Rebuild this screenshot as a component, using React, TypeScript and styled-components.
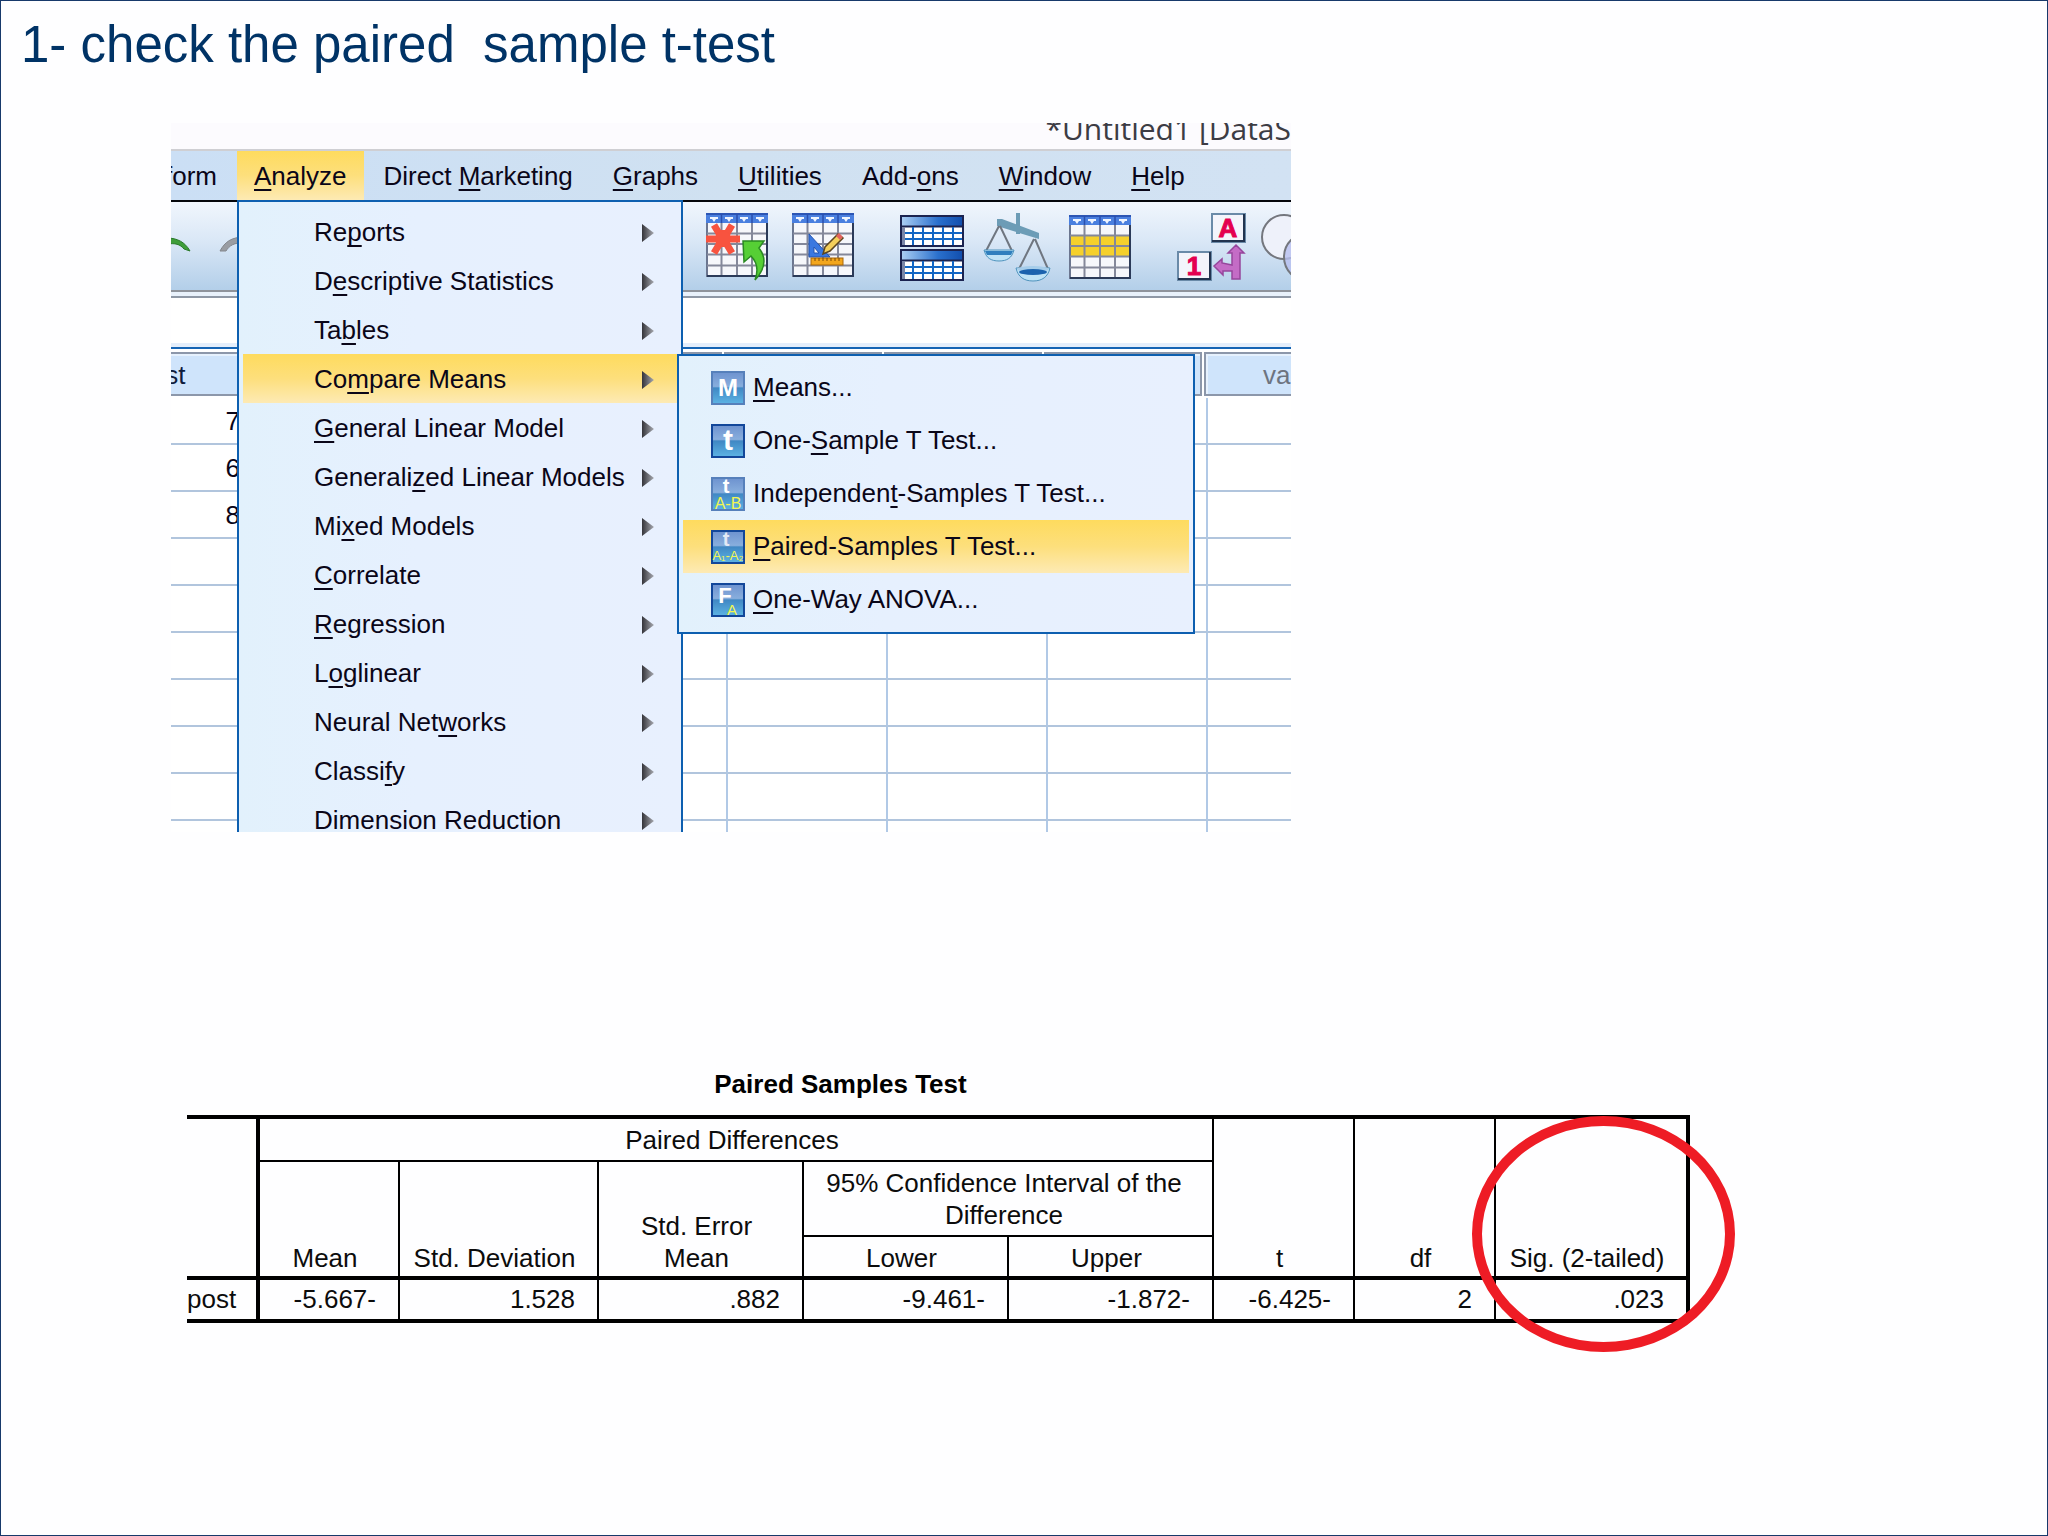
import React from 'react';
import styled, { createGlobalStyle, css } from 'styled-components';

const GlobalStyle = createGlobalStyle`
  * { box-sizing: border-box; }
  body {
    margin: 0;
    background: #fefeff;
    font-family: "Liberation Sans", Arial, sans-serif;
  }
  button {
    font: inherit;
    color: inherit;
    border: 0;
    background: none;
    cursor: pointer;
  }
`;

const highlight = css`
  background: linear-gradient(#fedb5e, #fddf7c 50%, #fdeab4);
`;

const Slide = styled.main`
  min-height: 100vh;
  border: 1px solid #17396b;
  background: #fefeff;
  padding: 14px 20px 40px;
`;

const SlideTitle = styled.h1`
  margin: 0 0 48px;
  font-size: 51px;
  line-height: 60px;
  font-weight: 400;
  color: #003366;
  white-space: pre-wrap;
`;

/* ---------- SPSS window ---------- */

const AppWindow = styled.section`
  width: 100%;
  max-width: 1120px;
  height: 709px;
  margin-left: 150px;
  overflow: hidden;
  font-size: 26px;
  color: #0a0618;
  background: #fff;
`;

const TitleBar = styled.header`
  display: flex;
  align-items: flex-end;
  justify-content: flex-end;
  height: 28px;
  padding-bottom: 2px;
  overflow: hidden;
  border-bottom: 2px solid #cfcfd3;
  background: #fcfbfe;
  font-family: "Open Sans", "Noto Sans", sans-serif;
  font-size: 30px;
  line-height: 36px;
  color: #3c3c44;
  white-space: nowrap;
`;

const MenuBar = styled.nav`
  display: flex;
  height: 51px;
  background: linear-gradient(90deg, #cbdff5, #d0e1f1 50%, #d2e2f3);
  border-bottom: 2px solid #05070c;
`;

const MenuRoot = styled.div`
  position: relative;
  display: flex;
`;

const MenuBarButton = styled.button<{ $active?: boolean }>`
  padding: 2px ${(p) => (p.$active ? 17 : 20)}px 0;
  white-space: nowrap;
  ${(p) => p.$active && highlight}
`;

const CutMenuBarButton = styled(MenuBarButton)`
  display: flex;
  align-items: center;
  justify-content: flex-end;
  width: 66px;
  overflow: hidden;
`;

const Mnemonic = styled.span`
  text-decoration: underline;
  text-decoration-thickness: 2px;
  text-underline-offset: 4px;
  text-decoration-skip-ink: none;
`;

const MenuPanel = styled.ul`
  position: absolute;
  z-index: 2;
  margin: 0;
  padding: 5px 4px;
  list-style: none;
  border: 2px solid #0d5fb0;
  background: linear-gradient(90deg, #e2f1fc, #e6f0fe 40%, #e8f0fe);
`;

const AnalyzePanel = styled(MenuPanel)`
  top: 49px;
  left: 0;
  width: 446px;
`;

const SubPanel = styled(MenuPanel)`
  top: 0;
  left: 100%;
  width: 518px;
  height: 280px;
`;

const MenuEntry = styled.li`
  position: relative;
`;

const MenuButton = styled.button<{ $active?: boolean }>`
  display: flex;
  align-items: center;
  justify-content: space-between;
  width: 100%;
  height: 49px;
  padding: 2px 23px 0 71px;
  text-align: left;
  white-space: nowrap;
  ${(p) => p.$active && highlight}
`;

const SubButton = styled(MenuButton)`
  justify-content: flex-start;
  gap: 8px;
  height: 53px;
  padding: 0 28px;
`;

const Toolbar = styled.div`
  display: flex;
  align-items: flex-start;
  gap: 40px;
  height: 96px;
  padding-top: 11px;
  border-bottom: 2px solid #8e98a6;
  background: linear-gradient(
    #f1f6fd 0,
    #d9e7f6 40px,
    #b3cfe9 88px,
    #8e939b 88px,
    #8e939b 90px,
    #e8f1fb 90px
  );
`;

const ToolGroup = styled.div<{ $width?: number }>`
  display: flex;
  flex: none;
  gap: 17px;
  width: ${(p) => (p.$width ? p.$width + 'px' : 'auto')};
`;

const ToolButton = styled.button`
  flex: none;
  padding: 0;
  line-height: 0;
`;

const EntryBar = styled.div`
  height: 51px;
  border-bottom: 2px solid #1564b4;
  background: linear-gradient(#fff 0, #fff 45px, #e4eefb 45px);
`;

const Sheet = styled.table`
  width: 1280px;
  margin: 3px 0 0 -83px;
  table-layout: fixed;
  border-spacing: 0;
`;

const SheetHead = styled.th`
  height: 46px;
  padding: 0;
  vertical-align: top;
  font-weight: 400;
`;

const HeadBox = styled.div<{ $dim?: boolean }>`
  height: 44px;
  margin: 0 6px 0 -4px;
  padding-right: 4px;
  border: 2px solid #8c97aa;
  background: #cfe4fb;
  box-shadow: inset 2px 2px 0 #e6f1fd;
  line-height: 42px;
  text-align: center;
  color: ${(p) => (p.$dim ? '#6d7480' : '#0f1c3c')};
`;

const SheetCell = styled.td`
  height: 47px;
  padding: 0 6px;
  border-right: 2px solid #b1c9e6;
  border-bottom: 2px solid #b1c5dd;
  text-align: right;
  line-height: 40px;
  background: #fff;
`;

/* ---------- result table ---------- */

const Results = styled.section`
  position: relative;
  width: 100%;
  max-width: 1503px;
  margin: 236px 0 0 166px;
`;

const StatTable = styled.table`
  width: 100%;
  table-layout: fixed;
  border-spacing: 0;
  border-top: 4px solid #000;
  border-bottom: 4px solid #000;
  font-size: 26px;
  line-height: 32px;
  color: #0c0c0c;
`;

const StatCaption = styled.caption`
  padding: 0 196px 15px 0;
  font-weight: 700;
  color: #000;
`;

const edge = (w: number) => `${w}px solid #000`;

const StatHead = styled.th<{ $right?: number; $bottom?: number; $middle?: boolean }>`
  padding: 2px 8px 2px 0;
  font-weight: 400;
  vertical-align: ${(p) => (p.$middle ? 'middle' : 'bottom')};
  border-right: ${(p) => edge(p.$right ?? 2)};
  border-bottom: ${(p) => edge(p.$bottom ?? 4)};
`;

const StatCell = styled.td<{ $right?: number }>`
  height: 39px;
  padding: 0 22px 2px 0;
  text-align: right;
  border-right: ${(p) => edge(p.$right ?? 2)};
`;

const StatRowHead = styled.th`
  padding: 0 20px 2px 0;
  font-weight: 400;
  text-align: right;
  border-right: ${edge(4)};
`;

const StatRow = styled.tr<{ $height: number }>`
  height: ${(p) => p.$height}px;
`;

const RedRing = styled.span`
  position: absolute;
  top: 48px;
  right: -45px;
  width: 263px;
  height: 236px;
  border: 10px solid #ee1c25;
  border-radius: 50%;
  pointer-events: none;
`;

/* ---------- icons ---------- */

const GridArt = ({ y = 0, band = false }: { y?: number; band?: boolean }) => (
  <g transform={`translate(0 ${y})`}>
    <rect x="1" y="1" width="60" height="62" fill="#f6f7fb" stroke="#6b7690" strokeWidth="2" />
    {band && <rect x="2" y="20" width="58" height="21" fill="#f5d02c" />}
    <path d="M15.5 10V63M31 10V63M46 10V63M1 20.5H61M1 31H61M1 41.5H61M1 52.5H61" stroke="#84889a" strokeWidth="2" />
    <rect x="0" y="0" width="62" height="10" fill="#4a7fdf" />
    <rect x="0" y="0" width="62" height="2" fill="#2c55b4" />
    <path d="M15.5 1V10M31 1V10M46 1V10" stroke="#2a4fae" strokeWidth="1.5" />
    <path d="M4 4H12V6H10L8 9L6 6H4ZM19 4H27V6H25L23 9L21 6H19ZM34 4H42V6H40L38 9L36 6H34ZM50 4H58V6H56L54 9L52 6H50Z" fill="#eef4ff" />
    <path d="M61 10V63H1" fill="none" stroke="#2b3a58" strokeWidth="2" />
  </g>
);

const Art = ({ label, children }: { label: string; children: React.ReactNode }) => (
  <svg width="68" height="72" viewBox="0 0 68 72" overflow="visible" role="img" aria-label={label}>
    {children}
  </svg>
);

const UndoArt = () => (
  <Art label="Undo">
    <path d="M-4 25C6 25 14 29 19 38L13 36C9 31 4 30 -4 31Z" fill="#3f9e3a" stroke="#2b7a2c" />
  </Art>
);

const RedoArt = () => (
  <Art label="Redo">
    <path d="M-36 38C-31 29 -25 24 -11 24V30C-22 29 -27 33 -30 38Z" fill="#9a9da3" stroke="#83868c" />
  </Art>
);

const VariablesArt = () => (
  <Art label="Go to case">
    <GridArt />
    <path d="M17 17V34M8 12L14 22M26 12L20 22M8 40L14 30M26 40L20 30M0 26H34" stroke="#f8533f" strokeWidth="7" />
    <circle cx="17" cy="26" r="8" fill="#f8533f" />
    <path d="M37 28H58L53 35C60 44 60 55 49 67C53 56 51 49 45 43L38 49Z" fill="#56cf35" stroke="#2a8a22" strokeWidth="1.500" />
  </Art>
);

const DesignArt = () => (
  <Art label="Variable view">
    <g transform="translate(1 0)">
      <GridArt />
      <path d="M17 21L38 44H17ZM22 34V40H27Z" fill="#3a78e0" fillRule="evenodd" stroke="#2554b0" />
      <path d="M31 41L33 34L46 21L51 25L38 38Z" fill="#f4cf5b" stroke="#5c4520" strokeWidth="1.500" />
      <path d="M44 23L47 20L51 24L48 27Z" fill="#e2625c" />
      <rect x="19" y="45" width="32" height="7" fill="#f3a61c" stroke="#a8670a" />
      <path d="M23 45V48M27 45V48M31 45V48M35 45V48M39 45V48M43 45V48M47 45V48" stroke="#7c4b06" />
    </g>
  </Art>
);

const SplitBlock = ({ y }: { y: number }) => (
  <g transform={`translate(1 ${y})`}>
    <rect x="1" y="1" width="62" height="30" fill="#fff" stroke="#1b2350" strokeWidth="2" />
    <rect x="2" y="2" width="60" height="9" fill="url(#splitHead)" />
    <path d="M1 11.500H63" stroke="#1b2350" strokeWidth="2" />
    <path d="M4 18H62M4 24H62M13 12V30M23 12V30M33 12V30M43 12V30M53 12V30" stroke="#1266c4" strokeWidth="2" />
    <path d="M3.500 12V30" stroke="#7a86a8" strokeWidth="3" />
  </g>
);

const SplitArt = () => (
  <Art label="Split file">
    <defs>
      <linearGradient id="splitHead">
        <stop offset="0" stopColor="#a9cdf3" />
        <stop offset="0.6" stopColor="#2a70cd" />
        <stop offset="1" stopColor="#124fae" />
      </linearGradient>
    </defs>
    <SplitBlock y={2} />
    <SplitBlock y={36} />
  </Art>
);

const ScalesArt = () => (
  <Art label="Weight cases">
    <path d="M34 0V21" stroke="#6c9cb6" strokeWidth="4" />
    <path d="M13 6H18L55 20V26L13 13Z" fill="#6c9cb6" />
    <path d="M15 13L2 38M16 13L28 38M50 26L35 56M51 26L64 56" stroke="#6f7680" strokeWidth="2" fill="none" />
    <path d="M0 37H30C28 45 23 48 15 48S2 45 0 37Z" fill="#bfe3f6" stroke="#4f93bd" />
    <path d="M1 38H29L27 42H3Z" fill="#2f7fbe" />
    <path d="M32 55H66C64 64 58 68 49 68S34 64 32 55Z" fill="#bfe3f6" stroke="#4f93bd" />
    <ellipse cx="49" cy="56" rx="16" ry="3" fill="#a6cdea" />
    <ellipse cx="49" cy="59" rx="14" ry="3" fill="#1b63ae" />
  </Art>
);

const SelectArt = () => (
  <Art label="Select cases">
    <GridArt y={2} band />
  </Art>
);

const LabelsArt = () => (
  <Art label="Value labels">
    <g fontFamily="Liberation Sans, Arial, sans-serif" fontWeight="700" fill="#e4004f" stroke="#e4004f" textAnchor="middle">
      <rect x="35" y="1" width="33" height="28" fill="#f3f4fb" stroke="#6a8aa8" strokeWidth="2" />
      <path d="M67 1V28H35" fill="none" stroke="#22344f" strokeWidth="2" />
      <text x="51" y="24" fontSize="26">A</text>
      <rect x="1" y="39" width="33" height="28" fill="#f3f4fb" stroke="#6a8aa8" strokeWidth="2" />
      <path d="M33 39V66H1" fill="none" stroke="#22344f" strokeWidth="2" />
      <text x="17" y="62" fontSize="26">1</text>
    </g>
    <path d="M59 32L67 40H63V66H55V58H46V62L37 53L45 46V50L55 52V40H51Z" fill="#c46cc6" stroke="#96469c" strokeWidth="1.500" />
  </Art>
);

const SetsArt = () => (
  <Art label="Use variable sets">
    <circle cx="22" cy="24" r="22" fill="#eef1fa" stroke="#74777e" strokeWidth="2" />
    <circle cx="46" cy="44" r="24" fill="#b6bff0" stroke="#74777e" strokeWidth="2" fillOpacity="0.8" />
  </Art>
);

const ArrowArt = () => (
  <svg width="12" height="18" viewBox="0 0 12 18" aria-hidden="true">
    <defs>
      <linearGradient id="arrowFill">
        <stop offset="0" stopColor="#34343a" />
        <stop offset="1" stopColor="#a7a9b0" />
      </linearGradient>
    </defs>
    <path d="M0 0L12 9L0 18Z" fill="url(#arrowFill)" />
  </svg>
);

type Glyph = { t: string; x: number; y: number; size: number; color?: string };

const TestArt = ({ glyphs, dark }: { glyphs: Glyph[]; dark?: boolean }) => (
  <svg width="34" height="34" viewBox="0 0 34 34" aria-hidden="true">
    <defs>
      <linearGradient id="testFill" x1="0" y1="0" x2="0" y2="1">
        <stop offset="0" stopColor="#6d92cf" />
        <stop offset="0.45" stopColor="#88aedd" />
        <stop offset="0.5" stopColor="#4088c4" />
        <stop offset="1" stopColor="#5db4e4" />
      </linearGradient>
    </defs>
    <rect x="1" y="1" width="32" height="32" fill="url(#testFill)" stroke={dark ? '#12479a' : '#5680bb'} strokeWidth="2" />
    {glyphs.map((g) => (
      <text
        key={g.t}
        x={g.x}
        y={g.y}
        fontSize={g.size}
        fontWeight={g.color === YELLOW ? 400 : 700}
        fontFamily="Liberation Sans, Arial, sans-serif"
        textAnchor="middle"
        fill={g.color ?? '#fff'}
      >
        {g.t}
      </text>
    ))}
  </svg>
);

/* ---------- data ---------- */

// An ampersand stands before the access key of each label.
const Label = ({ text }: { text: string }) => {
  const at = text.indexOf('&');
  if (at < 0) return <span>{text}</span>;
  return (
    <span>
      {text.slice(0, at)}
      <Mnemonic>{text[at + 1]}</Mnemonic>
      {text.slice(at + 2)}
    </span>
  );
};

const analyzeItems = [
  'Re&ports',
  'D&escriptive Statistics',
  'Ta&bles',
  'Co&mpare Means',
  '&General Linear Model',
  'Generali&zed Linear Models',
  'Mi&xed Models',
  '&Correlate',
  '&Regression',
  'L&oglinear',
  'Neural Net&works',
  'Classi&fy',
  '&Dimension Reduction',
];

const YELLOW = '#f3f650';

const meansItems: { label: string; dark?: boolean; active?: boolean; glyphs: Glyph[] }[] = [
  { label: '&Means...', glyphs: [{ t: 'M', x: 17, y: 25, size: 24 }] },
  { label: 'One-&Sample T Test...', dark: true, glyphs: [{ t: 't', x: 17, y: 26, size: 30 }] },
  {
    label: 'Independen&t-Samples T Test...',
    glyphs: [
      { t: 't', x: 15, y: 16, size: 20 },
      { t: 'A-B', x: 17, y: 32, size: 16, color: YELLOW },
    ],
  },
  {
    label: '&Paired-Samples T Test...',
    active: true,
    dark: true,
    glyphs: [
      { t: 't', x: 15, y: 16, size: 20, color: '#e3e9f5' },
      { t: 'A₁-A₂', x: 17, y: 30, size: 13, color: YELLOW },
    ],
  },
  {
    label: '&One-Way ANOVA...',
    dark: true,
    glyphs: [
      { t: 'F', x: 14, y: 20, size: 22 },
      { t: 'A', x: 21, y: 32, size: 15, color: YELLOW },
    ],
  },
];

const otherMenus = ['Direct &Marketing', '&Graphs', '&Utilities', 'Add-&ons', '&Window', '&Help'];
const scores = ['7', '6', '8', '', '', '', '', '', '', ''];
const emptyCols = [1, 2, 3, 4, 5, 6, 7];

const MeansMenu = () => (
  <SubPanel>
    {meansItems.map((m) => (
      <MenuEntry key={m.label}>
        <SubButton $active={m.active}>
          <TestArt glyphs={m.glyphs} dark={m.dark} />
          <Label text={m.label} />
        </SubButton>
      </MenuEntry>
    ))}
  </SubPanel>
);

const DataSheet = () => (
  <Sheet>
    <thead>
      <tr>
        <SheetHead scope="col">
          <HeadBox>post</HeadBox>
        </SheetHead>
        {emptyCols.map((c) => (
          <SheetHead key={c} scope="col">
            <HeadBox $dim>{c === 7 ? 'var' : ''}</HeadBox>
          </SheetHead>
        ))}
      </tr>
    </thead>
    <tbody>
      {scores.map((s, i) => (
        <tr key={i}>
          <SheetCell>{s}</SheetCell>
          {emptyCols.map((c) => (
            <SheetCell key={c} />
          ))}
        </tr>
      ))}
    </tbody>
  </Sheet>
);

const columnShares = [73, 140, 199, 205, 205, 205, 141, 141, 194];
const columnTotal = columnShares.reduce((a, b) => a + b, 0);

const ResultTable = () => (
  <Results>
    <StatTable>
      <StatCaption>Paired Samples Test</StatCaption>
      <colgroup>
        {columnShares.map((w, i) => (
          <col key={i} style={{ width: `${(w / columnTotal) * 100}%` }} />
        ))}
      </colgroup>
      <thead>
        <StatRow $height={43}>
          <StatHead as="td" rowSpan={3} $right={4} />
          <StatHead colSpan={5} $bottom={2} $middle>
            Paired Differences
          </StatHead>
          <StatHead rowSpan={3}>t</StatHead>
          <StatHead rowSpan={3}>df</StatHead>
          <StatHead rowSpan={3} $right={4}>
            Sig. (2-tailed)
          </StatHead>
        </StatRow>
        <StatRow $height={75}>
          <StatHead rowSpan={2}>Mean</StatHead>
          <StatHead rowSpan={2}>Std. Deviation</StatHead>
          <StatHead rowSpan={2}>
            Std. Error
            <br />
            Mean
          </StatHead>
          <StatHead colSpan={2} $bottom={2} $middle>
            95% Confidence Interval of the
            <br />
            Difference
          </StatHead>
        </StatRow>
        <StatRow $height={43}>
          <StatHead>Lower</StatHead>
          <StatHead>Upper</StatHead>
        </StatRow>
      </thead>
      <tbody>
        <tr>
          <StatRowHead scope="row">post</StatRowHead>
          <StatCell>-5.667-</StatCell>
          <StatCell>1.528</StatCell>
          <StatCell>.882</StatCell>
          <StatCell>-9.461-</StatCell>
          <StatCell>-1.872-</StatCell>
          <StatCell>-6.425-</StatCell>
          <StatCell>2</StatCell>
          <StatCell $right={4}>.023</StatCell>
        </tr>
      </tbody>
    </StatTable>
    <RedRing />
  </Results>
);

export default function App() {
  return (
    <>
      <GlobalStyle />
      <Slide>
        <SlideTitle>{'1- check the paired  sample t-test'}</SlideTitle>

        <AppWindow>
          <TitleBar>*Untitled1 [DataS</TitleBar>
          <MenuBar>
            <CutMenuBarButton>form</CutMenuBarButton>
            <MenuRoot>
              <MenuBarButton $active>
                <Label text="&Analyze" />
              </MenuBarButton>
              <AnalyzePanel>
                {analyzeItems.map((item) => {
                  const open = item === 'Co&mpare Means';
                  return (
                    <MenuEntry key={item}>
                      <MenuButton $active={open}>
                        <Label text={item} />
                        <ArrowArt />
                      </MenuButton>
                      {open && <MeansMenu />}
                    </MenuEntry>
                  );
                })}
              </AnalyzePanel>
            </MenuRoot>
            {otherMenus.map((m) => (
              <MenuBarButton key={m}>
                <Label text={m} />
              </MenuBarButton>
            ))}
          </MenuBar>
          <Toolbar>
            <ToolGroup $width={495}>
              <ToolButton><UndoArt /></ToolButton>
              <ToolButton><RedoArt /></ToolButton>
            </ToolGroup>
            <ToolGroup>
              <ToolButton><VariablesArt /></ToolButton>
              <ToolButton><DesignArt /></ToolButton>
            </ToolGroup>
            <ToolGroup>
              <ToolButton><SplitArt /></ToolButton>
              <ToolButton><ScalesArt /></ToolButton>
              <ToolButton><SelectArt /></ToolButton>
            </ToolGroup>
            <ToolGroup>
              <ToolButton><LabelsArt /></ToolButton>
              <ToolButton><SetsArt /></ToolButton>
            </ToolGroup>
          </Toolbar>
          <EntryBar />
          <DataSheet />
        </AppWindow>

        <ResultTable />
      </Slide>
    </>
  );
}
